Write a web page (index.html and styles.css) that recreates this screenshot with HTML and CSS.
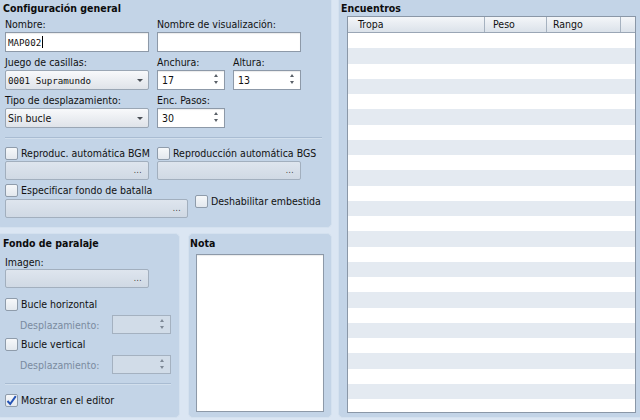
FILE: index.html
```html
<!DOCTYPE html>
<html lang="es">
<head>
<meta charset="utf-8">
<link rel="stylesheet" href="styles.css">
</head>
<body>
<div class="root">
  <div class="leftcol">
    <section class="panel general">
      <h2 class="ptitle">Configuración general</h2>
      <div class="grid2">
        <div class="field"><span class="lbl">Nombre:</span><div class="input mono">MAP002<span class="caret"></span></div></div>
        <div class="field"><span class="lbl">Nombre de visualización:</span><div class="input"></div></div>
        <div class="field"><span class="lbl">Juego de casillas:</span><div class="combo mono">0001 Supramundo<span class="arrow"></span></div></div>
        <div class="pair">
          <div class="field"><span class="lbl">Anchura:</span><div class="spin">17<span class="spinarrows"><i class="up"></i><i class="down"></i></span></div></div>
          <div class="field"><span class="lbl">Altura:</span><div class="spin">13<span class="spinarrows"><i class="up"></i><i class="down"></i></span></div></div>
        </div>
        <div class="field"><span class="lbl">Tipo de desplazamiento:</span><div class="combo">Sin bucle<span class="arrow"></span></div></div>
        <div class="pair">
          <div class="field"><span class="lbl">Enc. Pasos:</span><div class="spin">30<span class="spinarrows"><i class="up"></i><i class="down"></i></span></div></div>
        </div>
      </div>
      <div class="sep"></div>
      <div class="grid2 audio">
        <div>
          <div class="check"><span class="box"></span>Reproduc. automática BGM</div>
          <div class="browse"><span class="dots">...</span></div>
        </div>
        <div>
          <div class="check"><span class="box"></span>Reproducción automática BGS</div>
          <div class="browse"><span class="dots">...</span></div>
        </div>
      </div>
      <div class="battle-row">
        <div class="battle">
          <div class="check"><span class="box"></span>Especificar fondo de batalla</div>
          <div class="browse wide"><span class="dots">...</span></div>
        </div>
        <div class="check dash"><span class="box"></span>Deshabilitar embestida</div>
      </div>
    </section>
    <div class="bottomrow">
      <section class="panel parallax">
        <h2 class="ptitle">Fondo de paralaje</h2>
        <div class="lbl img">Imagen:</div>
        <div class="browse"><span class="dots">...</span></div>
        <div class="check c1"><span class="box"></span>Bucle horizontal</div>
        <div class="subrow"><span class="disabled">Desplazamiento:</span><div class="spin off"><span class="spinarrows"><i class="up"></i><i class="down"></i></span></div></div>
        <div class="check c2"><span class="box"></span>Bucle vertical</div>
        <div class="subrow"><span class="disabled">Desplazamiento:</span><div class="spin off"><span class="spinarrows"><i class="up"></i><i class="down"></i></span></div></div>
        <div class="sep small"></div>
        <div class="check c3"><span class="box checked"><svg width="11" height="11" viewBox="0 0 11 11"><path d="M1.5 6 L4.2 9 L9.8 1.2" fill="none" stroke="#2453b5" stroke-width="2"/></svg></span>Mostrar en el editor</div>
      </section>
      <section class="panel note">
        <h2 class="ptitle">Nota</h2>
        <div class="textarea"></div>
      </section>
    </div>
  </div>
  <section class="panel encounters">
    <h2 class="ptitle">Encuentros</h2>
    <div class="table">
      <div class="thead">
        <div class="th c-tropa">Tropa</div>
        <div class="th c-peso">Peso</div>
        <div class="th c-rango">Rango</div>
        <div class="th c-rest"></div>
      </div>
      <div class="tbody"></div>
    </div>
  </section>
</div>
</body>
</html>
```
FILE: styles.css
```css
html, body {
  margin: 0;
  padding: 0;
}
body {
  width: 640px;
  height: 420px;
  overflow: hidden;
  background: #dbe6f3;
  font-family: "DejaVu Sans Condensed", "DejaVu Sans", sans-serif;
  font-stretch: condensed;
  font-size: 10.5px;
  color: #111;
}
.root {
  display: grid;
  grid-template-columns: 336px 306px;
  column-gap: 6px;
  margin: -4px 0 0 -4px;
  height: 422px;
}
.leftcol {
  display: flex;
  flex-direction: column;
  gap: 5px;
}
.panel {
  background: #c3d4e7;
  border: 1px solid #d4e1ef;
  border-radius: 5px;
  box-sizing: border-box;
}
.ptitle {
  margin: 0 0 0 -2px;
  font-size: 10.5px;
  font-weight: bold;
  line-height: 12px;
  height: 12px;
  color: #0c0c0c;
}
.general {
  height: 232px;
  padding: 5px 9px 0 8px;
}
.grid2 {
  display: grid;
  grid-template-columns: 144px 144px;
  column-gap: 8px;
}
.pair {
  display: flex;
  gap: 8px;
}
.pair .field {
  width: 68px;
}
.lbl {
  display: block;
  box-sizing: border-box;
  height: 18px;
  padding-top: 3px;
  line-height: 14px;
}
.mono {
  font-family: "DejaVu Sans Mono", monospace;
  font-stretch: normal;
  font-size: 9.2px;
}
.input, .combo, .spin {
  box-sizing: border-box;
  height: 20px;
  display: flex;
  align-items: center;
  position: relative;
}
.input {
  background: #fff;
  border: 1px solid #8d99a8;
  padding-left: 2px;
  box-shadow: inset 0 1px 1px rgba(0, 0, 0, 0.08);
}
.caret {
  display: inline-block;
  width: 1px;
  height: 12px;
  background: #000;
  margin-left: 1px;
}
.combo {
  border: 1px solid #9aa6b4;
  border-radius: 2px;
  background: linear-gradient(#f8f9fb, #dfe3e9);
  padding-left: 2px;
}
.arrow {
  position: absolute;
  right: 5px;
  top: 8px;
  width: 0;
  height: 0;
  border-left: 3px solid transparent;
  border-right: 3px solid transparent;
  border-top: 3px solid #4a4f56;
}
.spin {
  background: #fff;
  border: 1px solid #8d99a8;
  padding-left: 4px;
  box-shadow: inset 0 1px 1px rgba(0, 0, 0, 0.08);
}
.spinarrows {
  position: absolute;
  right: 6px;
  top: 3px;
  display: flex;
  flex-direction: column;
  gap: 4px;
}
.spinarrows i {
  display: block;
  width: 0;
  height: 0;
  border-left: 2.5px solid transparent;
  border-right: 2.5px solid transparent;
}
.spinarrows .up {
  border-bottom: 3px solid #5a6068;
}
.spinarrows .down {
  border-top: 3px solid #5a6068;
}
.spin.off {
  width: 59px;
  height: 19px;
  background: #d1dce8;
  border-color: #a4b1c0;
  box-shadow: none;
}
.spin.off .spinarrows .up { border-bottom-color: #7d8895; }
.spin.off .spinarrows .down { border-top-color: #7d8895; }
.spin.off .spinarrows { top: 3px; }

.sep {
  margin-top: 9px;
  border-top: 1px solid #a9bcd2;
  border-bottom: 1px solid #d2dfed;
}
.check {
  display: flex;
  align-items: center;
  gap: 3px;
  height: 14px;
  line-height: 14px;
  white-space: nowrap;
}
.box {
  box-sizing: border-box;
  width: 13px;
  height: 13px;
  border: 1px solid #8f9cab;
  border-radius: 2px;
  background: linear-gradient(#f6f8fa, #e3e8ee);
  flex: none;
  display: flex;
  align-items: center;
  justify-content: center;
}
.audio .check {
  margin-top: 7px;
}
.browse {
  box-sizing: border-box;
  width: 144px;
  height: 19px;
  margin-top: 1px;
  border: 1px solid #a2afbe;
  border-radius: 2px;
  background: linear-gradient(#dee5ee, #d0d9e4);
  display: flex;
  align-items: center;
  justify-content: flex-end;
  padding-right: 6px;
}
.browse.wide {
  width: 183px;
  margin-top: 2px;
}
.dots {
  font-size: 8px;
  color: #333;
  letter-spacing: 0.5px;
}
.battle-row {
  display: flex;
  align-items: center;
  gap: 7px;
  margin-top: 3px;
}
.dash {
  margin-top: 1px;
}

.bottomrow {
  display: flex;
  gap: 8px;
  height: 185px;
}
.parallax {
  width: 184px;
  padding: 3px 8px 0 8px;
}
.lbl.img {
  height: 20px;
  padding-top: 6px;
}
.parallax .browse {
  margin-top: 0;
}
.parallax .check.c1 {
  margin-top: 9px;
}
.subrow {
  display: flex;
  justify-content: space-between;
  align-items: center;
  padding-left: 15px;
  margin-top: 4px;
}
.disabled {
  color: #7a8ba0;
}
.parallax .check.c2 {
  margin-top: 3px;
}
.sep.small {
  margin-top: 9px;
}
.parallax .check.c3 {
  margin-top: 8px;
}
.box.checked {
  background: linear-gradient(#f6f8fa, #e3e8ee);
}

.note {
  width: 144px;
  padding: 3px 0 0 3px;
}
.textarea {
  box-sizing: border-box;
  width: 128px;
  height: 158px;
  margin: 5px 0 0 4px;
  background: #fff;
  border: 1px solid #8d99a8;
  box-shadow: inset 0 1px 1px rgba(0, 0, 0, 0.08);
}

.encounters {
  height: 422px;
  padding: 5px 0 0 4px;
}
.table {
  box-sizing: border-box;
  margin: 2px 0 0 4px;
  width: 289px;
  height: 397px;
  border: 1px solid #8a97a7;
  background: #fff;
  display: flex;
  flex-direction: column;
}
.thead {
  display: flex;
  height: 16px;
  box-sizing: border-box;
  border-bottom: 1px solid #9aa6b5;
  background: linear-gradient(#f4f6f9, #dbe2ea);
}
.th {
  box-sizing: border-box;
  border-right: 1px solid #a6b2c0;
  line-height: 15px;
  padding-left: 8px;
}
.c-tropa { width: 137px; padding-left: 10px; }
.c-peso { width: 62px; }
.c-rango { width: 74px; padding-left: 6px; }
.c-rest { flex: 1; border-right: none; }
.tbody {
  flex: 1;
  background: repeating-linear-gradient(#ffffff 0 15.25px, #e4eaf1 15.25px 30.5px);
}
```
